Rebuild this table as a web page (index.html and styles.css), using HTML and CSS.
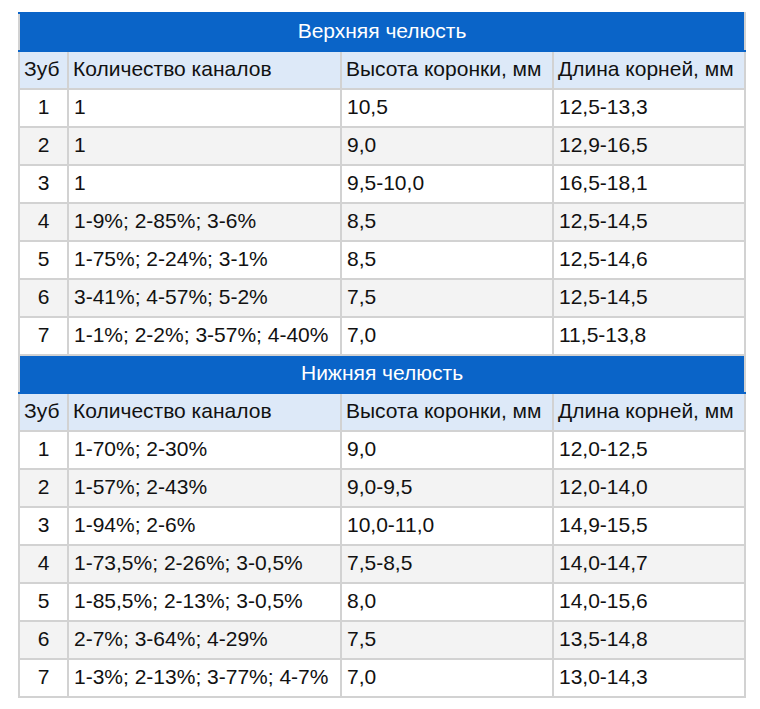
FILE: index.html
```html
<!DOCTYPE html>
<html lang="ru">
<head>
<meta charset="utf-8">
<link rel="stylesheet" href="styles.css">
</head>
<body>
<div class="wrap">
<table class="teeth">
<colgroup><col class="c1"><col class="c2"><col class="c3"><col class="c4"></colgroup>
<tbody>
<tr class="jaw"><th colspan="4">Верхняя челюсть</th></tr>
<tr class="sub"><td>Зуб</td><td>Количество каналов</td><td>Высота коронки, мм</td><td>Длина корней, мм</td></tr>
<tr><td class="n">1</td><td>1</td><td>10,5</td><td>12,5-13,3</td></tr>
<tr class="alt"><td class="n">2</td><td>1</td><td>9,0</td><td>12,9-16,5</td></tr>
<tr><td class="n">3</td><td>1</td><td>9,5-10,0</td><td>16,5-18,1</td></tr>
<tr class="alt"><td class="n">4</td><td>1-9%; 2-85%; 3-6%</td><td>8,5</td><td>12,5-14,5</td></tr>
<tr><td class="n">5</td><td>1-75%; 2-24%; 3-1%</td><td>8,5</td><td>12,5-14,6</td></tr>
<tr class="alt"><td class="n">6</td><td>3-41%; 4-57%; 5-2%</td><td>7,5</td><td>12,5-14,5</td></tr>
<tr><td class="n">7</td><td>1-1%; 2-2%; 3-57%; 4-40%</td><td>7,0</td><td>11,5-13,8</td></tr>
<tr class="jaw"><th colspan="4">Нижняя челюсть</th></tr>
<tr class="sub"><td>Зуб</td><td>Количество каналов</td><td>Высота коронки, мм</td><td>Длина корней, мм</td></tr>
<tr><td class="n">1</td><td>1-70%; 2-30%</td><td>9,0</td><td>12,0-12,5</td></tr>
<tr class="alt"><td class="n">2</td><td>1-57%; 2-43%</td><td>9,0-9,5</td><td>12,0-14,0</td></tr>
<tr><td class="n">3</td><td>1-94%; 2-6%</td><td>10,0-11,0</td><td>14,9-15,5</td></tr>
<tr class="alt"><td class="n">4</td><td>1-73,5%; 2-26%; 3-0,5%</td><td>7,5-8,5</td><td>14,0-14,7</td></tr>
<tr><td class="n">5</td><td>1-85,5%; 2-13%; 3-0,5%</td><td>8,0</td><td>14,0-15,6</td></tr>
<tr class="alt"><td class="n">6</td><td>2-7%; 3-64%; 4-29%</td><td>7,5</td><td>13,5-14,8</td></tr>
<tr><td class="n">7</td><td>1-3%; 2-13%; 3-77%; 4-7%</td><td>7,0</td><td>13,0-14,3</td></tr>
</tbody>
</table>
</div>
</body>
</html>
```
FILE: styles.css
```css
html, body {
  margin: 0;
  padding: 0;
  background: #ffffff;
}
.wrap {
  padding: 12px 0 0 18px;
}
.teeth {
  border-collapse: collapse;
  table-layout: fixed;
  width: 726px;
  font-family: "Liberation Sans", Arial, sans-serif;
  font-size: 21px;
  color: #111;
  border: 2px solid #d2d2d2;
}
.c1 { width: 49px; }
.c2 { width: 273px; }
.c3 { width: 212px; }
.c4 { width: 192px; }
.teeth tr { height: 38px; }
.teeth td, .teeth th {
  line-height: 24px;
  padding-top: 0;
  padding-bottom: 3px;
}
.teeth td {
  border: 2px solid #d2d2d2;
  padding-left: 5px;
  padding-right: 2px;
  white-space: nowrap;
  background: #ffffff;
}
.teeth tr.alt td { background: #f3f3f3; }
.teeth td.n { text-align: center; padding-left: 0; padding-right: 0; }
.teeth .sub td { background: #dde9f8; padding-left: 4px; padding-right: 0; }
.teeth .jaw th {
  background: #0a64c8;
  color: #ffffff;
  font-weight: normal;
  text-align: center;
  border: 2px solid #0a64c8;
  border-left-color: #d2d2d2;
  border-right-color: #d2d2d2;
}
```
